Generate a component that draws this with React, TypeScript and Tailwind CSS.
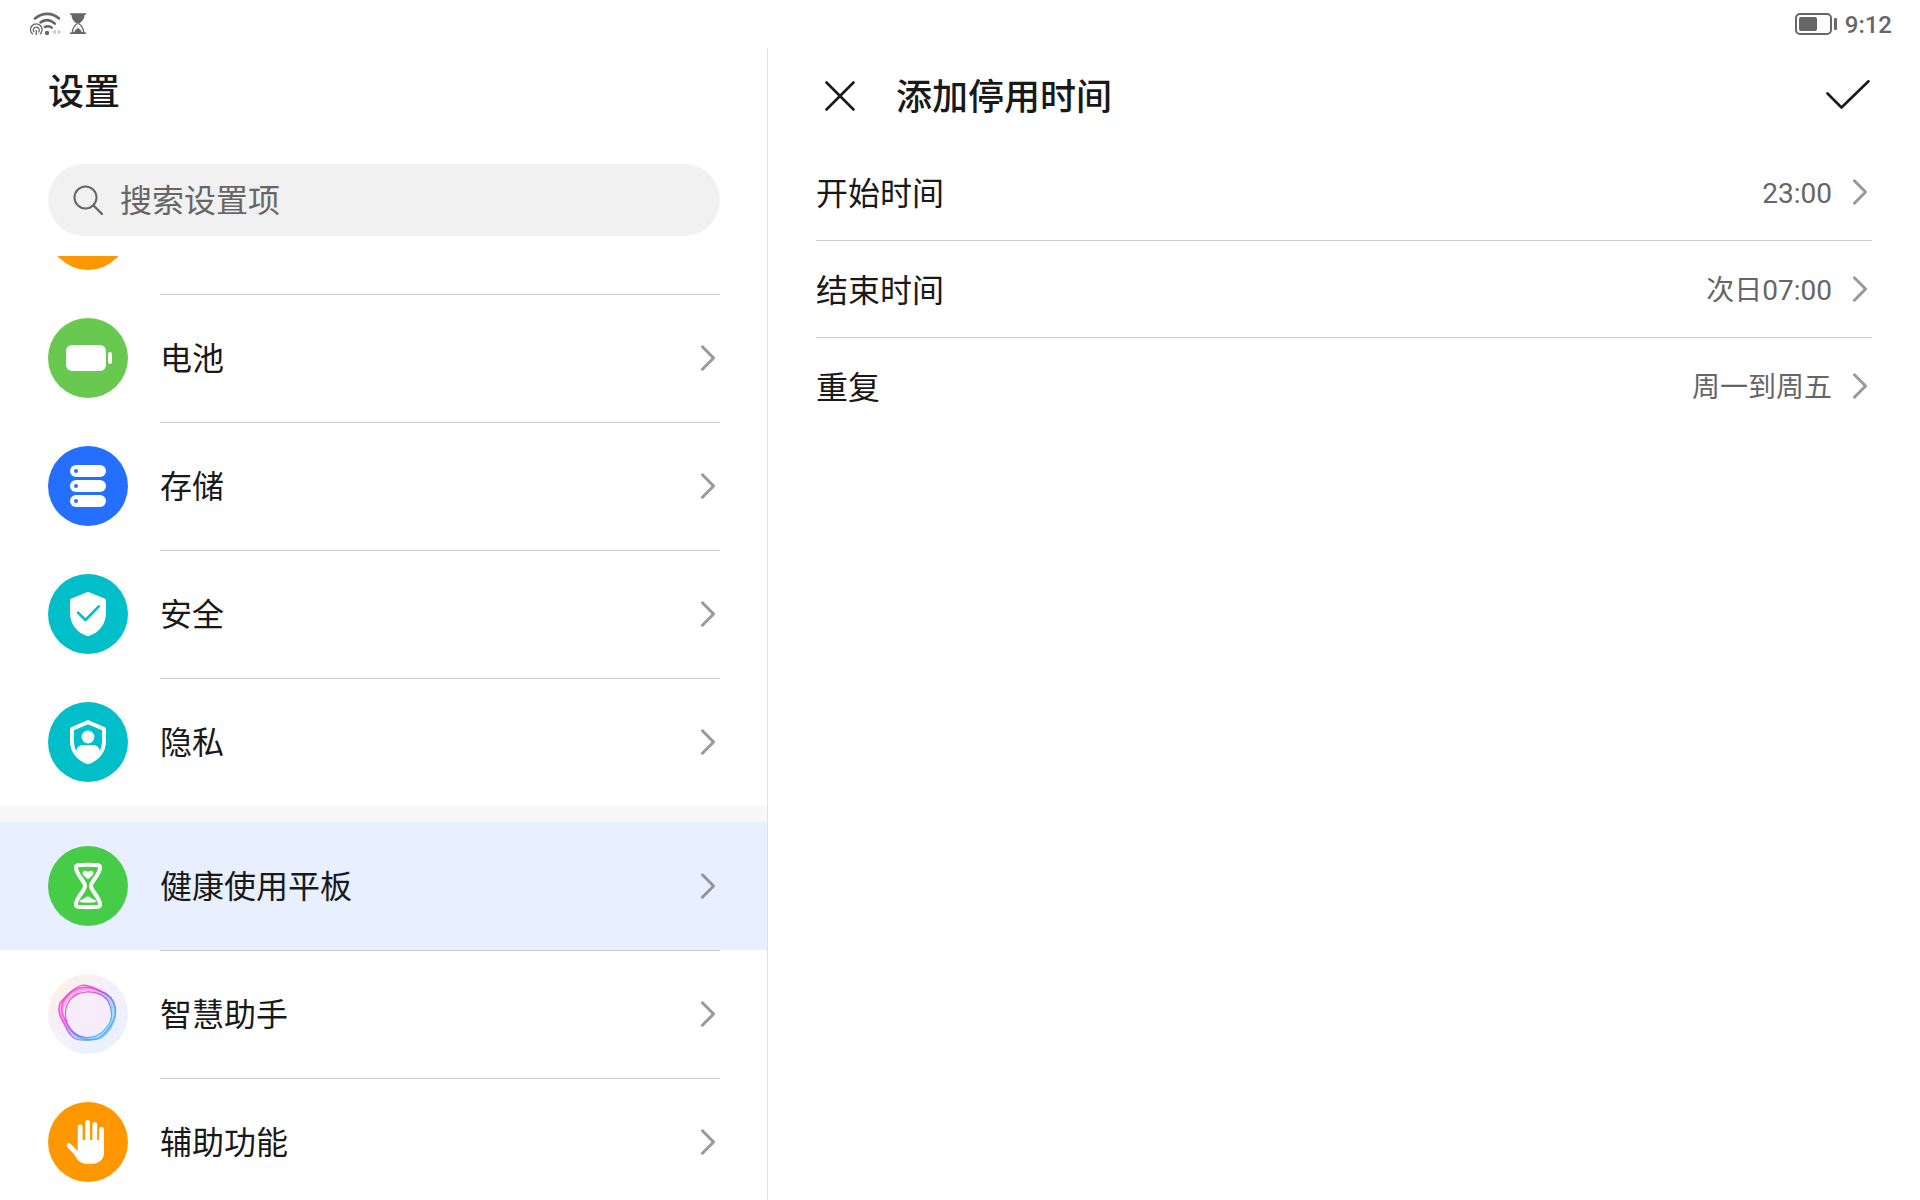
import { useState } from "react";
import type { ReactNode } from "react";
import clsx from "clsx";

type Item = {
  id: string;
  label: string;
  icon: ReactNode;
  startsGroup?: boolean;
};

type Option = {
  label: string;
  value: string;
};

function Chevron({ className }: { className?: string }) {
  return (
    <svg
      className={clsx("shrink-0", className)}
      width="16"
      height="28"
      viewBox="0 0 16 28"
      fill="none"
      stroke="currentColor"
      strokeWidth="3"
      strokeLinecap="round"
      strokeLinejoin="round"
      aria-hidden="true"
    >
      <path d="M2.4 2.8 13.600 14 2.4 25.2" />
    </svg>
  );
}

function Badge({ color, children }: { color: string; children?: ReactNode }) {
  return (
    <svg className="shrink-0" width="80" height="80" viewBox="0 0 80 80" aria-hidden="true">
      <circle cx="40" cy="40" r="40" fill={color} />
      {children}
    </svg>
  );
}

function BatteryBadge() {
  return (
    <Badge color="#68c84f">
      <rect x="18" y="27" width="40" height="26" rx="6" fill="#fff" />
      <rect x="60" y="34" width="4" height="12" rx="2" fill="#fff" />
    </Badge>
  );
}

function StorageBadge() {
  return (
    <Badge color="#256fff">
      {[19, 34, 49].map((y) => (
        <g key={y}>
          <rect x="22" y={y} width="36" height="12" rx="6" fill="#fff" />
          <circle cx="28" cy={y + 6} r="2" fill="#256fff" />
        </g>
      ))}
    </Badge>
  );
}

function SecurityBadge() {
  return (
    <Badge color="#00bfc9">
      <path
        d="M38.8 18.3a3 3 0 0 1 2.4 0L56.5 24.6A2.4 2.4 0 0 1 58 26.8V39c0 11-7 19.5-16.6 22.8a4 4 0 0 1-2.8 0C29 58.5 22 50 22 39V26.8a2.4 2.4 0 0 1 1.5-2.2Z"
        fill="#fff"
      />
      <path
        d="m30 38.6 7.5 7.4L50.8 32.4"
        fill="none"
        stroke="#00bfc9"
        strokeWidth="2.6"
        strokeLinecap="round"
        strokeLinejoin="round"
      />
    </Badge>
  );
}

function PrivacyBadge() {
  return (
    <Badge color="#00bfc9">
      <path
        d="M40 20.2 56 27V39c0 10.500-6.500 18-16 21.200C30.500 57 24 49.500 24 39V27Z"
        fill="none"
        stroke="#fff"
        strokeWidth="4"
        strokeLinejoin="round"
      />
      <circle cx="40" cy="35" r="6.400" fill="#fff" />
      <path
        d="M28 50.500c.5-4.500 2.500-7.200 6.500-7.200h11c4 0 6 2.700 6.500 7.200C49.500 55.500 45 59.500 40 61.500 35 59.500 30.500 55.500 28 50.500Z"
        fill="#fff"
      />
    </Badge>
  );
}

function HourglassBadge() {
  return (
    <Badge color="#47cc47">
      <path
        d="M30.200 19.200Q40 18.400 49.800 19.200 52.600 19.500 52 22.600C50.500 30 43 35.500 43 40S50.500 50 52 57.400Q52.600 60.500 49.800 60.800 40 61.600 30.200 60.800 27.400 60.500 28 57.400C29.500 50 37 44.500 37 40S29.500 30 28 22.600Q27.400 19.500 30.200 19.200Z"
        fill="none"
        stroke="#fff"
        strokeWidth="4"
        strokeLinejoin="round"
      />
      <path
        d="M40 33.200c-2.400-1.800-5.400-3.700-5.400-6.200 0-2.600 3.800-3.200 5.400-.8 1.600-2.400 5.400-1.800 5.400.8 0 2.500-3 4.400-5.400 6.200Z"
        fill="#fff"
      />
      <path d="M31.500 56c1-3 4.500-2.800 6-4.600q2.500-1.800 5 0c1.500 1.800 5 1.600 6 4.600q-8.500 1.400-17 0Z" fill="#fff" />
    </Badge>
  );
}

function AssistantBadge() {
  return (
    <svg className="shrink-0" width="80" height="80" viewBox="0 0 80 80" aria-hidden="true">
      <defs>
        <linearGradient id="halo" x1="0.100" y1="0.100" x2="0.800" y2="0.900">
          <stop offset="0" stopColor="#fdf1e6" />
          <stop offset="0.450" stopColor="#f6effb" />
          <stop offset="1" stopColor="#eaf1fe" />
        </linearGradient>
        <linearGradient id="ribbon" x1="0.100" y1="0.200" x2="0.800" y2="0.850">
          <stop offset="0" stopColor="#fa35cb" />
          <stop offset="0.300" stopColor="#e040e0" />
          <stop offset="0.550" stopColor="#8560ee" />
          <stop offset="0.800" stopColor="#4b9cf2" />
          <stop offset="1" stopColor="#42b4f2" />
        </linearGradient>
      </defs>
      <circle cx="40" cy="40" r="40" fill="url(#halo)" />
      <g stroke="url(#ribbon)" strokeLinejoin="round">
        {/* pale wash where the ribbons overlap */}
        <path
          d="M36 14.500C45 13.500 54 18 60 24 66 31 67 42 63.500 49 60 58 50 62 43 64 33 65.500 25 62 20 53 15 46 11.500 40 13.500 33 17 24 26 16.500 36 14.500Z"
          fill="none"
          strokeWidth="5"
          opacity="0.350"
        />
        <path
          d="M33 11.500C40 9.500 47 15 53 17.500 62 20 66 26 67.500 34 69 45 62 53 56 60 50 67 41 66 33 66 24 66 20 58 17 51 13 43 9 38 12 29 19 21 25 14 33 11.500Z"
          fill="none"
          strokeWidth="1.200"
          opacity="0.900"
        />
        <path
          d="M32 14C42 12 50 16 58 20 67 25 69.500 38 65 48 61 58 54 66 44 65.500 33 66 26 62 20 52 15 43 12 36 15 28 19 21 24 16 32 14Z"
          fill="none"
          strokeWidth="1.500"
          opacity="0.700"
        />
        <path
          d="M38 18C47 17 56 21 60 27 64 34 65 44 61 50 56 57 50 64 39 63.500 29 63 23 58 19 49 16 39 18 31 22 26 27 20 31 19 38 18Z"
          fill="#f7ecfb"
          strokeWidth="1.200"
          opacity="0.900"
        />
      </g>
    </svg>
  );
}

function AccessibilityBadge() {
  return (
    <Badge color="#ff9800">
      <g fill="none" stroke="#fff" strokeWidth="4.800" strokeLinecap="round">
        <path d="M32.200 25v20M39.600 20.400v24M46.800 22.400v22M53.600 27.500v18" />
        <path d="m21 43.600 11 11" />
      </g>
      <path
        d="M29.800 38H56v12.500C56 57.500 51 61.800 44 61.800h-5.500c-4 0-7-1.800-9.500-4.800L23 47.500l6.800 1.500Z"
        fill="#fff"
      />
    </Badge>
  );
}

function WifiStatus() {
  return (
    <svg width="32" height="24" viewBox="0 0 32 24" fill="none" stroke="#666" aria-hidden="true">
      <path d="M5 6.500C12.500.3 22 .3 29 6.500" strokeWidth="2.600" strokeLinecap="round" />
      <path d="M10.500 10.300c5-3.300 10-2.600 14.300 1.300" strokeWidth="2.600" strokeLinecap="round" />
      <path d="M15 15c2.500-1.200 5-.7 6.600.6" strokeWidth="2.600" strokeLinecap="round" />
      <circle cx="17" cy="21" r="2.200" fill="#666" stroke="none" />
      <path d="M2.800 22.300a5.800 5.800 0 1 1 7 0" strokeWidth="1.300" />
      <path d="M4.300 20.300a3 3 0 1 1 4 0" strokeWidth="1.200" />
      <path d="M6.300 18v5" strokeWidth="1.300" />
      <path d="M26 17.500v5l-4-2.500ZM27.500 17.500v5l4-2.500Z" fill="#ccc" stroke="none" />
    </svg>
  );
}

function HourglassStatus() {
  return (
    <svg width="16" height="24" viewBox="0 0 16 24" aria-hidden="true">
      <path d="M0 1.200h16v1.600h-1.500c0 4.200-2.500 7-5.300 8.700H6.800C4 9.800 1.500 7 1.500 2.800H0Z" fill="#666" />
      <path
        d="M7.300 11.500C4.500 13.500 2.300 16.500 2.300 21h11.400c0-4.500-2.200-7.500-5-9.500"
        fill="none"
        stroke="#666"
        strokeWidth="1.400"
      />
      <path d="M4.300 20.500c.4-2.500 2-3.600 3.700-4.500 1.700.9 3.300 2 3.700 4.500ZM0 20.400h16V22H0Z" fill="#666" />
    </svg>
  );
}

function BatteryStatus() {
  return (
    <svg width="42" height="24" viewBox="0 0 42 24" aria-hidden="true">
      <rect x="1" y="2" width="35" height="20" rx="4" fill="none" stroke="#666" strokeWidth="2" />
      <rect x="4" y="5" width="18" height="14" rx="2" fill="#666" />
      <rect x="39" y="6" width="3" height="12" rx="1" fill="#666" />
    </svg>
  );
}

const items: Item[] = [
  { id: "previous", label: "", icon: <Badge color="#ff9800" /> },
  { id: "battery", label: "电池", icon: <BatteryBadge /> },
  { id: "storage", label: "存储", icon: <StorageBadge /> },
  { id: "security", label: "安全", icon: <SecurityBadge /> },
  { id: "privacy", label: "隐私", icon: <PrivacyBadge /> },
  { id: "balance", label: "健康使用平板", icon: <HourglassBadge />, startsGroup: true },
  { id: "assistant", label: "智慧助手", icon: <AssistantBadge /> },
  { id: "accessibility", label: "辅助功能", icon: <AccessibilityBadge /> },
];

const options: Option[] = [
  { label: "开始时间", value: "23:00" },
  { label: "结束时间", value: "次日07:00" },
  { label: "重复", value: "周一到周五" },
];

function StatusBar() {
  return (
    <header className="flex h-12 shrink-0 items-center justify-between pr-7 pl-[30px] text-[#666]">
      <div className="flex items-center gap-2">
        <WifiStatus />
        <HourglassStatus />
      </div>
      <div className="flex items-center gap-2">
        <BatteryStatus />
        <span className="pt-0.5 text-2xl font-medium">9:12</span>
      </div>
    </header>
  );
}

function Sidebar() {
  const [selected, setSelected] = useState("balance");
  const [query, setQuery] = useState("");

  return (
    <aside className="flex w-2/5 shrink-0 flex-col">
      <h1 className="flex h-[88px] shrink-0 items-center px-12 pt-0.5 text-4xl font-medium">设置</h1>
      <label className="mx-12 mt-7 mb-5 flex h-[72px] shrink-0 items-center gap-4 rounded-full bg-[#f1f1f1] px-6 text-[#666]">
        <svg
          className="shrink-0"
          width="32"
          height="32"
          viewBox="0 0 32 32"
          fill="none"
          stroke="currentColor"
          strokeWidth="2"
          strokeLinecap="round"
          aria-hidden="true"
        >
          <circle cx="13.500" cy="13.500" r="11" />
          <path d="m21.500 21.500 8.500 8.500" strokeWidth="2.400" />
        </svg>
        <input
          type="search"
          aria-label="搜索设置项"
          placeholder="搜索设置项"
          value={query}
          onChange={(e) => setQuery(e.target.value)}
          className="min-w-0 flex-1 bg-transparent pt-0.5 text-[32px] outline-none placeholder:text-[#666]"
        />
      </label>
      <nav className="min-h-0 flex-1 overflow-hidden">
        <ul className="-mt-[90px]">
          {items.map((item) => (
            <li key={item.id} className={clsx(item.startsGroup && "border-t-16 border-[#f7f7f7]")}>
              <button
                type="button"
                onClick={() => setSelected(item.id)}
                className={clsx(
                  "flex h-32 w-full cursor-pointer items-center gap-8 px-12 text-left",
                  selected === item.id && "bg-[#e8efff]"
                )}
              >
                {item.icon}
                <span
                  className={clsx(
                    "flex h-full flex-1 items-center justify-between border-t pr-1 pb-px",
                    item.startsGroup ? "border-transparent" : "border-[#cbcbcb]"
                  )}
                >
                  <span className="pt-0.5 text-[32px]">{item.label}</span>
                  <Chevron className={selected === item.id ? "text-[#8f949e]" : "text-[#999]"} />
                </span>
              </button>
            </li>
          ))}
        </ul>
      </nav>
    </aside>
  );
}

function DowntimePanel() {
  return (
    <main className="-ml-px min-w-0 flex-1 border-l border-[#e2e2e2] px-12">
      <div className="flex h-24 items-center">
        <button type="button" aria-label="关闭" className="flex size-12 cursor-pointer items-center justify-center">
          <svg
            width="32"
            height="32"
            viewBox="0 0 32 32"
            fill="none"
            stroke="currentColor"
            strokeWidth="2.600"
            strokeLinecap="round"
          >
            <path d="m2.500 2.500 27 27M29.500 2.500l-27 27" />
          </svg>
        </button>
        <h2 className="ml-8 flex-1 pt-1 text-4xl font-medium">添加停用时间</h2>
        <button type="button" aria-label="确定" className="flex h-12 cursor-pointer items-center justify-center">
          <svg
            width="48"
            height="32"
            viewBox="0 0 48 32"
            fill="none"
            stroke="currentColor"
            strokeWidth="2.600"
            strokeLinecap="round"
            strokeLinejoin="round"
          >
            <path d="M3.500 13.500 17.500 27.500 44.500 1.300" />
          </svg>
        </button>
      </div>
      <ul className="divide-y divide-[#cbcbcb]">
        {options.map((option) => (
          <li key={option.label}>
            <button type="button" className="flex h-24 w-full cursor-pointer items-center pr-1 text-left">
              <span className="flex-1 pt-1 text-[32px]">{option.label}</span>
              <span className="mr-5 pt-1 text-[28px] text-[#666]">{option.value}</span>
              <Chevron className="text-[#999]" />
            </button>
          </li>
        ))}
      </ul>
    </main>
  );
}

export default function App() {
  return (
    <div className="flex h-screen flex-col overflow-hidden bg-white font-[Roboto,'Noto_Sans_CJK_SC',sans-serif] text-[#191919]">
      <StatusBar />
      <div className="flex min-h-0 flex-1">
        <Sidebar />
        <DowntimePanel />
      </div>
    </div>
  );
}
